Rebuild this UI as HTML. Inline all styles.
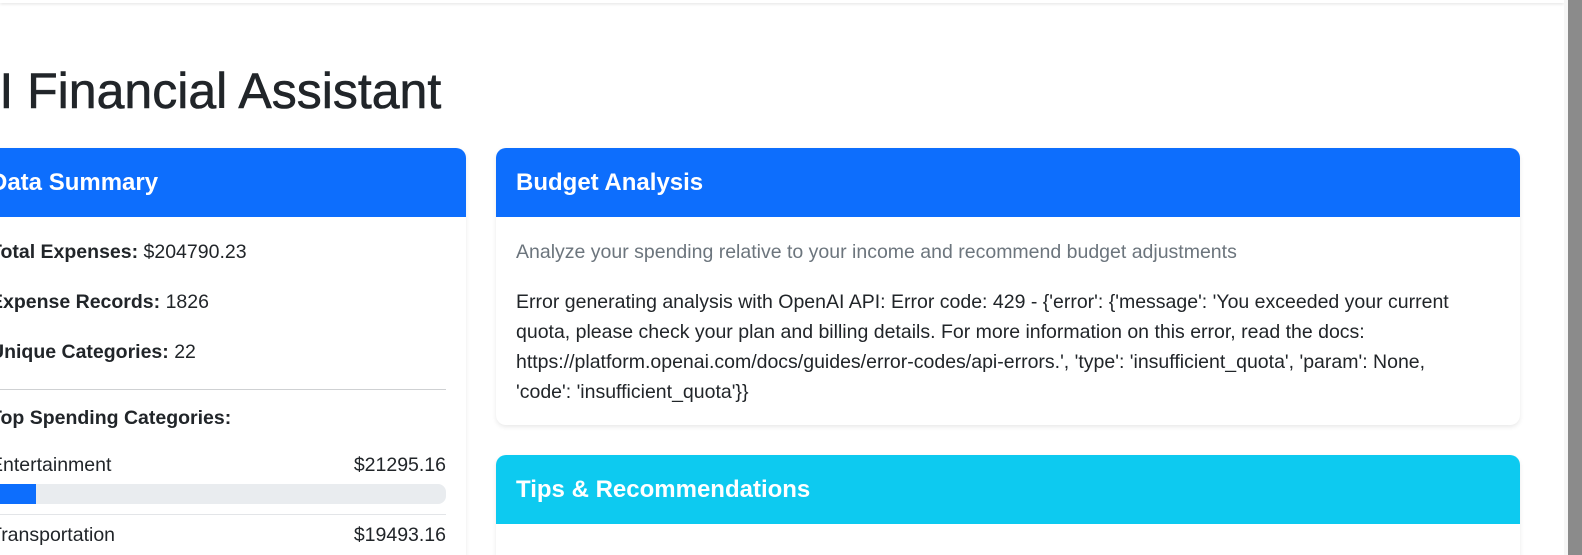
<!DOCTYPE html>
<html><head><meta charset="utf-8"><style>
*{box-sizing:border-box;margin:0;padding:0}
html,body{width:1582px;height:555px;overflow:hidden}
body{background:#fff;font-family:"Liberation Sans",sans-serif;color:#212529}
#w{position:relative;width:1582px;height:555px;overflow:hidden}
.nav{position:absolute;left:0;top:0;width:1564px;height:3px;box-shadow:0 1px 3px rgba(0,0,0,.12);background:#fff}
.sb1{position:absolute;left:1564px;top:0;width:4px;height:555px;background:#f6f6f6}
.sb2{position:absolute;left:1568px;top:0;width:14px;height:555px;background:#8b8b8b}
h1{position:absolute;left:-34px;top:61px;font-size:50px;line-height:60px;font-weight:400;white-space:nowrap;color:#212529;-webkit-text-stroke:0.6px #212529}
.card{position:absolute;background:#fff;border-radius:10px;box-shadow:0 2px 5px rgba(0,0,0,.09);overflow:hidden}
.hd{height:69px;padding:0 20px;line-height:69px;color:#fff;font-size:24px;font-weight:700;white-space:nowrap}
.bd{padding:20px;font-size:19.5px;line-height:30px;white-space:nowrap}
p{margin-bottom:20px}
.bar{height:20px;border-radius:8px;background:#e9ecef;overflow:hidden;margin-top:4px}
.bar i{display:block;height:20px;width:46px;background:#0d6efd}
.row{display:flex;justify-content:space-between}
</style></head><body><div id="w">
<div class="nav"></div><div class="sb1"></div><div class="sb2"></div>
<h1>AI Financial Assistant</h1>

<div class="card" style="left:-30px;top:148px;width:496px;height:407px;border-bottom-left-radius:0;border-bottom-right-radius:0">
<div class="hd" style="background:#0d6efd;padding-left:20px">Data Summary</div>
<div class="bd">
<p><b>Total Expenses:</b> $204790.23</p>
<p><b>Expense Records:</b> 1826</p>
<p style="margin-bottom:22px"><b>Unique Categories:</b> 22</p>
<div style="height:1px;background:#cfd1d3;margin-bottom:13px"></div>
<p style="margin-bottom:17px"><b>Top Spending Categories:</b></p>
<div class="row"><span>Entertainment</span><span>$21295.16</span></div>
<div class="bar"><i></i></div>
<div style="height:1px;background:#e3e5e8;margin-top:10px;margin-bottom:5px"></div>
<div class="row"><span>Transportation</span><span>$19493.16</span></div>
</div></div>

<div class="card" style="left:496px;top:148px;width:1024px;height:277px">
<div class="hd" style="background:#0d6efd">Budget Analysis</div>
<div class="bd">
<p style="color:#6c757d">Analyze your spending relative to your income and recommend budget adjustments</p>
<p style="margin:0">Error generating analysis with OpenAI API: Error code: 429 - {'error': {'message': 'You exceeded your current<br>quota, please check your plan and billing details. For more information on this error, read the docs:<br>https://platform.openai.com/docs/guides/error-codes/api-errors.', 'type': 'insufficient_quota', 'param': None,<br>'code': 'insufficient_quota'}}</p>
</div></div>

<div class="card" style="left:496px;top:455px;width:1024px;height:100px;border-bottom-left-radius:0;border-bottom-right-radius:0">
<div class="hd" style="background:#0dcaf0">Tips &amp; Recommendations</div>
</div>
</div></body></html>
